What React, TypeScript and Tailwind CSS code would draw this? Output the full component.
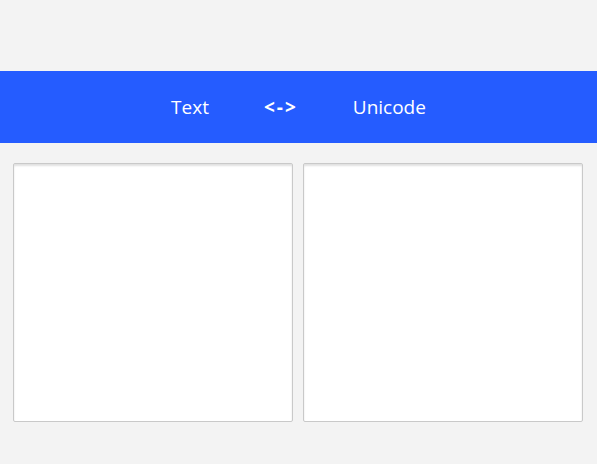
import React from "react";

export default function App() {
  return (
    <div className="min-h-[464px] w-full bg-[#f3f3f3] pt-[71px]" style={{ fontFamily: '"Open Sans", "Noto Sans", sans-serif' }}>
      <div className="flex h-[72px] items-center justify-center gap-[55px] bg-[#255cff] text-[19px] text-white">
        <span>Text</span>
        <span className="font-bold tracking-[2px]">&lt;-&gt;</span>
        <span>Unicode</span>
      </div>
      <div className="flex gap-[10px] pl-[13px] pt-[20px]">
        <textarea className="h-[259px] w-[280px] resize-none rounded-[2px] border border-[#c9c9c9] bg-white shadow-[inset_0_2px_2px_rgba(0,0,0,0.12)] outline-none" />
        <textarea className="h-[259px] w-[280px] resize-none rounded-[2px] border border-[#c9c9c9] bg-white shadow-[inset_0_2px_2px_rgba(0,0,0,0.12)] outline-none" />
      </div>
    </div>
  );
}
